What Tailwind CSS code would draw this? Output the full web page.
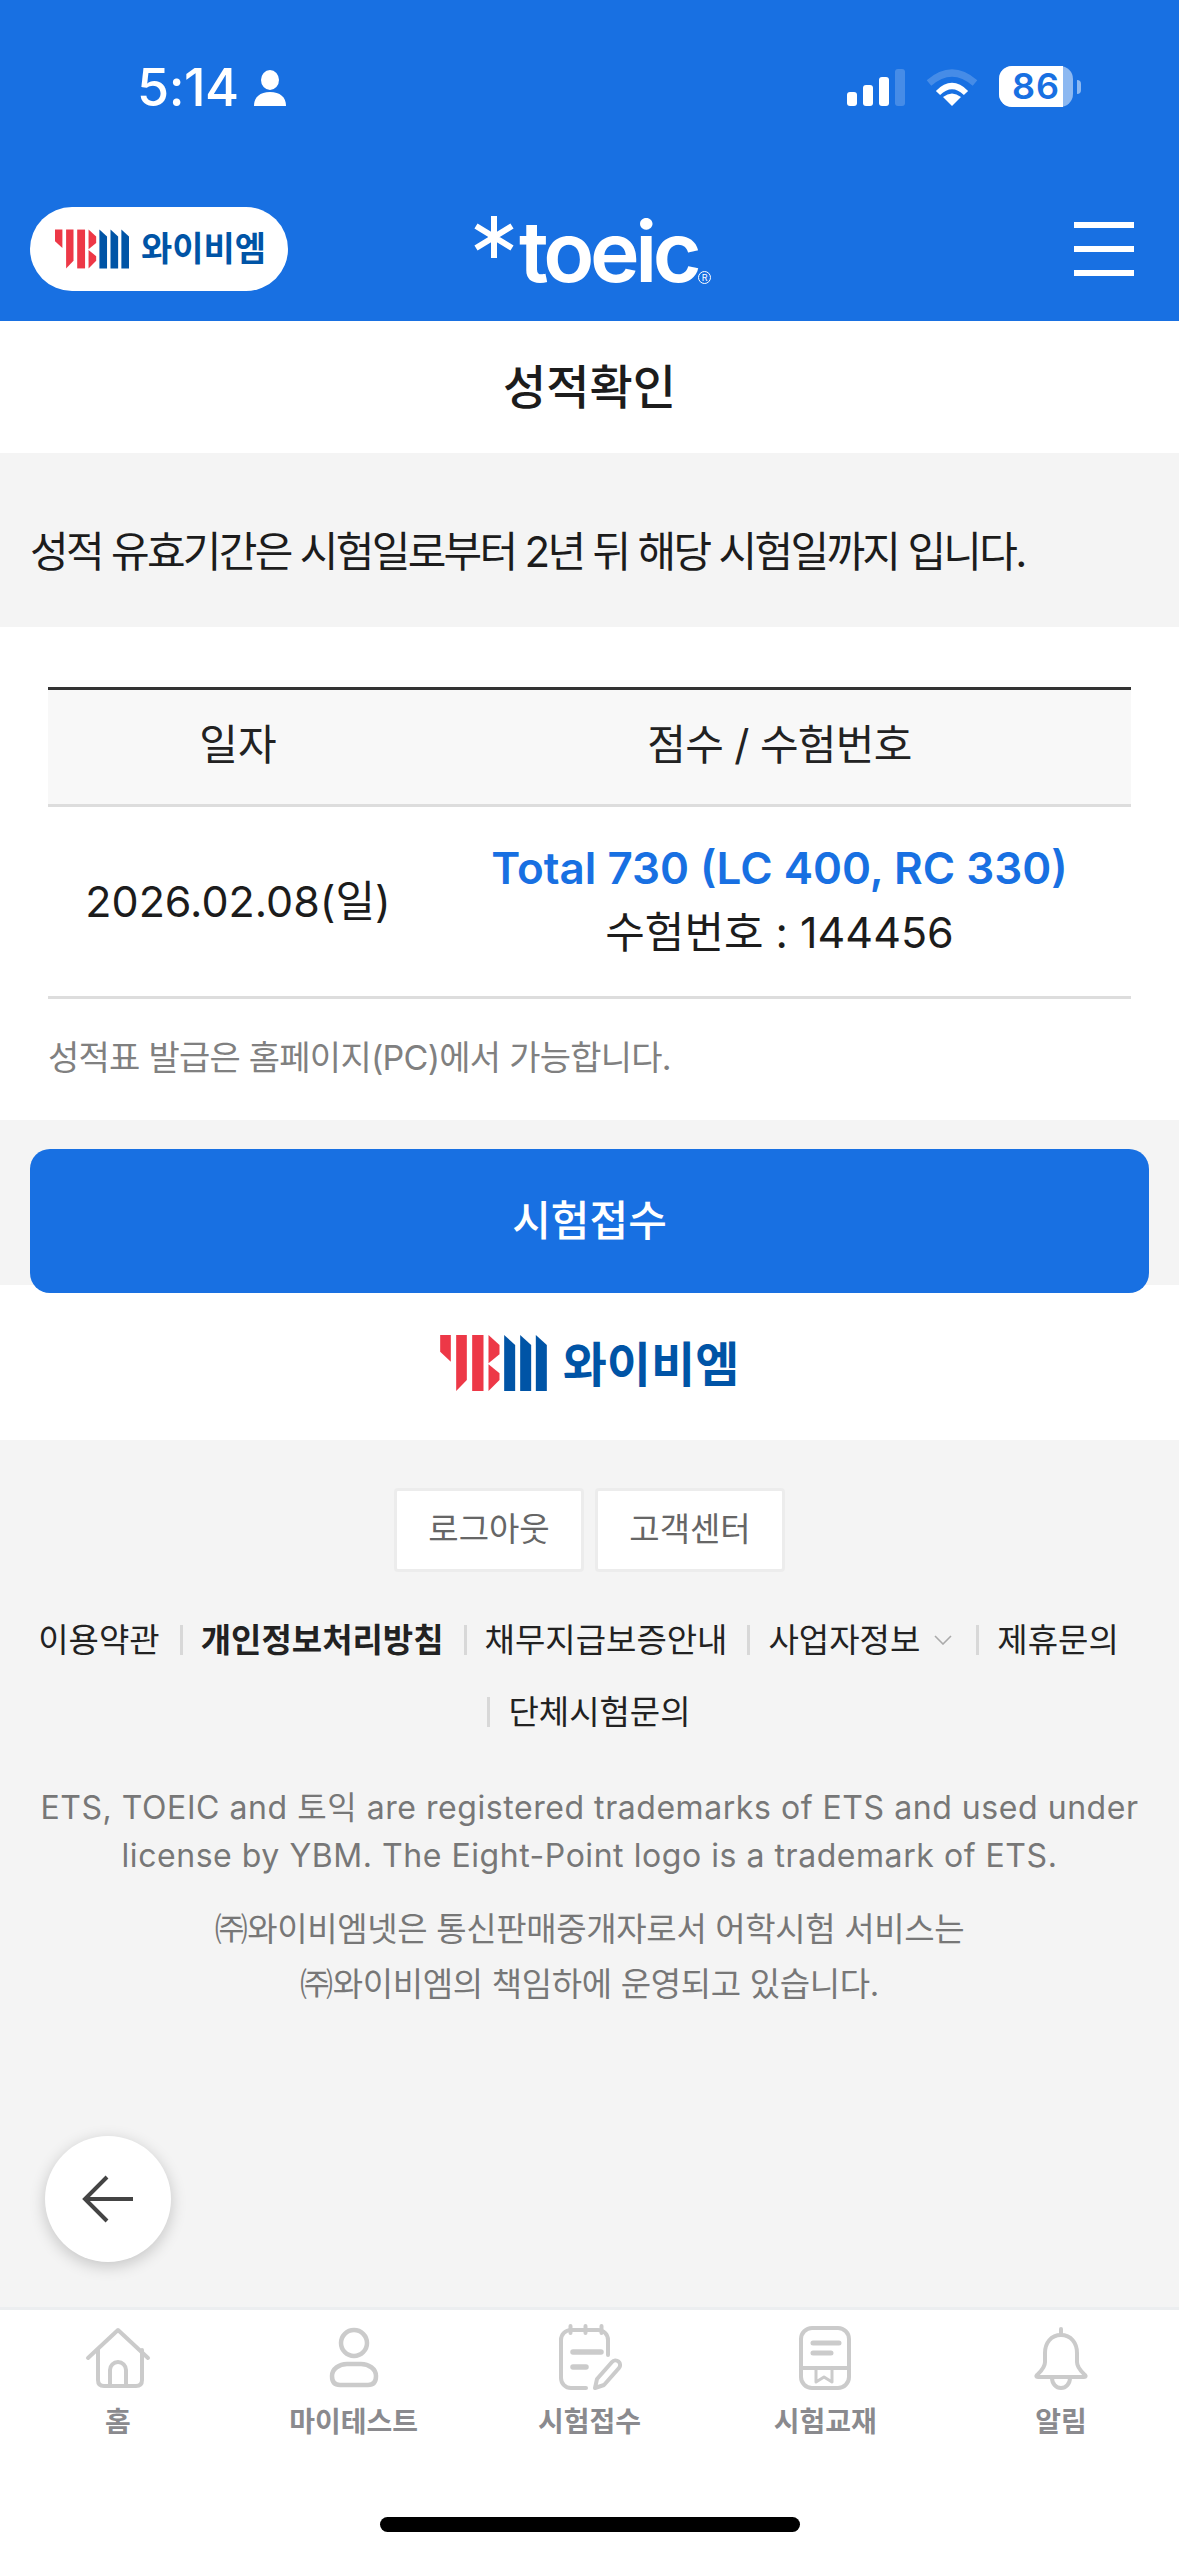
<!DOCTYPE html>
<html lang="ko">
<head>
<meta charset="utf-8">
<script src="https://cdn.jsdelivr.net/npm/@tailwindcss/browser@4"></script>
</head>
<body class="m-0 bg-white">
<div class="relative flex h-[2556px] w-[1179px] flex-col overflow-hidden bg-[#f4f4f4] font-['Inter','Noto_Sans_CJK_KR',sans-serif] text-[#222]">

  <!-- Header -->
  <header class="h-[321px] shrink-0 bg-[#1870e2] text-white">
    <div class="flex h-[207px] items-start justify-between pt-[66px] pl-[137px] pr-[98px]">
      <div class="flex items-center gap-[14px]">
        <span class="text-[52px] leading-[44px] font-medium tracking-[-0.5px]">5:14</span>
        <svg class="h-[36px] w-[34px]" viewBox="0 0 34 36" fill="#fff"><ellipse cx="17" cy="10" rx="9" ry="10"/><path d="M1 36c0-9 6-14 16-14s16 5 16 14z"/></svg>
      </div>
      <div class="flex items-start">
        <svg class="mt-[3px] h-[38px] w-[60px]" viewBox="0 0 60 38" fill="#fff"><rect x="2" y="23" width="10" height="14" rx="3"/><rect x="18" y="16" width="10" height="21" rx="3"/><rect x="34" y="8" width="10" height="29" rx="3"/><rect x="50" y="0" width="10" height="37" rx="3" opacity=".2"/></svg>
        <svg class="mt-[2px] ml-[21px] h-[40px] w-[52px]" viewBox="0 0 52 40" fill="none"><path d="M3 15Q26 -5 49 15" stroke="#fff" stroke-width="7" opacity=".2"/><path d="M12 25Q26 11 40 25" stroke="#fff" stroke-width="6"/><path d="M26 38L17 29Q26 22 35 29Z" fill="#fff"/></svg>
        <div class="relative ml-[21px] flex h-[41px] w-[74px] items-center rounded-[13px] bg-white/50">
          <div class="absolute inset-y-0 left-0 w-[64px] rounded-l-[13px] bg-white"></div>
          <span class="relative w-[74px] text-center text-[36px] leading-[41px] font-semibold tracking-[1px] text-[#1870e2]">86</span>
        </div>
        <div class="mt-[14px] ml-[4px] h-[14px] w-[4px] rounded-r-full bg-white/50"></div>
      </div>
    </div>
    <div class="flex h-[84px] items-center justify-between pl-[30px] pr-[45px]">
      <div class="flex h-[84px] w-[258px] items-center gap-[12px] rounded-full bg-white pl-[25px]">
        <svg class="h-[40px] w-[74px]" viewBox="60 70 320 168"><g fill="#ed3847"><path d="M60 70H92V150L60 120Z"/><path d="M108 70H140V205L108 238Z"/><path d="M156 70H190V238H156Z"/><path d="M205 70L238 100V128L205 155Z"/><path d="M205 158L238 185V205L205 238Z"/></g><g fill="#0054a6"><path d="M252 70L285 100V238H252Z"/><path d="M300 70L333 100V238H300Z"/><path d="M347 70L380 100V238H347Z"/></g></svg>
        <span class="text-[34px] leading-[40px] font-bold text-[#0054a6]">와이비엠</span>
      </div>
      <div class="ml-[186px] flex h-[84px] items-start">
        <svg class="mt-[9px] h-[42px] w-[40px]" viewBox="0 0 40 42" stroke="#fff" stroke-width="6"><path d="M20 0V42M2 10L38 32M2 32L38 10"/></svg>
        <span class="ml-[5px] text-[84px] leading-[90px] font-semibold tracking-[-4.5px]">toeic</span>
        <span class="mt-[64px] ml-[1px] flex h-[13px] w-[13px] items-center justify-center rounded-full border border-white text-[9px] leading-none">R</span>
      </div>
      <div class="ml-auto flex w-[60px] flex-col gap-[18px]">
        <div class="h-[6px] bg-white"></div>
        <div class="h-[6px] bg-white"></div>
        <div class="h-[6px] bg-white"></div>
      </div>
    </div>
  </header>

  <!-- Title -->
  <div class="flex h-[132px] shrink-0 items-center justify-center bg-white">
    <h1 class="text-[47px] font-medium text-[#1c1c1c]">성적확인</h1>
  </div>

  <!-- Notice -->
  <div class="flex h-[174px] shrink-0 items-center px-[30px] pt-[22px]">
    <p class="text-[42px] tracking-[-2.7px] text-[#1c1c1c]">성적 유효기간은 시험일로부터 2년 뒤 해당 시험일까지 입니다.</p>
  </div>

  <!-- Result table -->
  <section class="h-[493px] shrink-0 bg-white px-[48px] pt-[60px]">
    <div class="grid grid-cols-[380px_1fr] border-t-[3px] border-b-[3px] border-t-[#333] border-b-[#ddd] bg-[#f8f8f8] text-[42px] text-[#222]">
      <div class="flex h-[114px] items-center justify-center pb-[6px]">일자</div>
      <div class="flex h-[114px] items-center justify-center pb-[6px] tracking-[-0.7px]">점수 / 수험번호</div>
    </div>
    <div class="grid h-[192px] grid-cols-[380px_1fr] border-b-[3px] border-[#ddd] text-[43px]">
      <div class="flex items-center justify-center text-[#1c1c1c]">2026.02.08(일)</div>
      <div class="flex flex-col items-center justify-center">
        <span class="mt-[-4px] text-[44px] leading-[64px] font-semibold text-[#1870e2]">Total 730 (LC 400, RC 330)</span>
        <span class="text-[#1c1c1c] leading-[64px]">수험번호 : 144456</span>
      </div>
    </div>
    <p class="mt-[36px] text-[34px] leading-[46px] tracking-[-0.75px] text-[#808080]">성적표 발급은 홈페이지(PC)에서 가능합니다.</p>
  </section>

  <!-- Button -->
  <div class="relative z-10 h-[165px] shrink-0 px-[30px] pt-[29px]">
    <button class="flex h-[144px] w-full items-center justify-center rounded-[20px] bg-[#1870e2] pb-[2px] text-[42px] font-medium text-white">시험접수</button>
  </div>

  <!-- Logo band -->
  <div class="flex h-[155px] shrink-0 items-center justify-center gap-[16px] bg-white">
    <svg class="h-[56px] w-[107px]" viewBox="60 70 320 168"><g fill="#ed3847"><path d="M60 70H92V150L60 120Z"/><path d="M108 70H140V205L108 238Z"/><path d="M156 70H190V238H156Z"/><path d="M205 70L238 100V128L205 155Z"/><path d="M205 158L238 185V205L205 238Z"/></g><g fill="#0054a6"><path d="M252 70L285 100V238H252Z"/><path d="M300 70L333 100V238H300Z"/><path d="M347 70L380 100V238H347Z"/></g></svg>
    <span class="pt-[5px] text-[48px] leading-[56px] font-bold text-[#0054a6]">와이비엠</span>
  </div>

  <!-- Footer -->
  <footer class="flex-1 pt-[48px]">
    <div class="flex justify-center gap-[11px]">
      <a class="flex h-[84px] w-[190px] items-center justify-center rounded-[4px] border-[3px] border-[#ececec] bg-white text-[33px] text-[#666]">로그아웃</a>
      <a class="flex h-[84px] w-[190px] items-center justify-center rounded-[4px] border-[3px] border-[#ececec] bg-white text-[33px] text-[#666]">고객센터</a>
    </div>
    <ul class="mt-[32px] flex w-[1157px] flex-wrap justify-center text-[33px] leading-[72px] text-[#222]">
      <li>이용약관</li>
      <li class="flex items-center pl-[20px]"><i class="mr-[18px] h-[30px] w-[3px] bg-[#d8d8d8]"></i><b class="font-bold">개인정보처리방침</b></li>
      <li class="flex items-center pl-[20px]"><i class="mr-[18px] h-[30px] w-[3px] bg-[#d8d8d8]"></i>채무지급보증안내</li>
      <li class="flex items-center pl-[20px]"><i class="mr-[18px] h-[30px] w-[3px] bg-[#d8d8d8]"></i>사업자정보<svg class="ml-[14px] h-[10px] w-[18px]" viewBox="0 0 18 10" fill="none" stroke="#aaa" stroke-width="1.6"><path d="M1 1L9 9L17 1"/></svg></li>
      <li class="flex items-center pl-[24px]"><i class="mr-[18px] h-[30px] w-[3px] bg-[#d8d8d8]"></i>제휴문의</li>
      <li class="flex items-center pl-[21px]"><i class="mr-[18px] h-[30px] w-[3px] bg-[#d8d8d8]"></i>단체시험문의</li>
    </ul>
    <p class="mt-[36px] text-center text-[32px] leading-[48px] tracking-[0.55px] text-[#777]">ETS, TOEIC and 토익 are registered trademarks of ETS and used under<br>license by YBM. The Eight-Point logo is a trademark of ETS.</p>
    <p class="mt-[22px] text-center text-[33px] leading-[55px] tracking-[-0.35px] text-[#777]">㈜와이비엠넷은 통신판매중개자로서 어학시험 서비스는<br>㈜와이비엠의 책임하에 운영되고 있습니다.</p>
  </footer>

  <!-- Back button -->
  <button class="absolute top-[2136px] left-[45px] z-20 flex h-[126px] w-[126px] items-center justify-center rounded-full bg-white shadow-[0_4px_16px_rgba(0,0,0,0.2)]">
    <svg class="h-[48px] w-[52px]" viewBox="0 0 52 48" fill="none" stroke="#444" stroke-width="4"><path d="M25 2L3 24L25 46M3 24H51"/></svg>
  </button>

  <!-- Tab bar -->
  <nav class="h-[249px] shrink-0 border-t-[3px] border-[#eceef0] bg-white">
    <div class="grid grid-cols-5 pt-[12px] text-center text-[28px] leading-[36px] font-semibold text-[#8a8a8e]">
      <div class="flex flex-col items-center gap-[10px]">
        <svg class="h-[72px] w-[72px]" viewBox="0 0 72 72" fill="none" stroke="#cbcbcb" stroke-width="4" stroke-linecap="round" stroke-linejoin="round"><path d="M6 36L36 8L66 36"/><path d="M16 28V58Q16 64 22 64H54Q60 64 60 58V28"/><path d="M28 64V48a8 8 0 0 1 16 0V64"/></svg>
        <span>홈</span>
      </div>
      <div class="flex flex-col items-center gap-[10px]">
        <svg class="h-[72px] w-[72px]" viewBox="0 0 72 72" fill="none" stroke="#cbcbcb" stroke-width="4.5" stroke-linecap="round" stroke-linejoin="round"><circle cx="36" cy="21" r="13"/><path d="M14 54C14 47 21 42 29 42H43C51 42 58 47 58 54C58 60 55 63 50 63H22C17 63 14 60 14 54Z"/></svg>
        <span>마이테스트</span>
      </div>
      <div class="flex flex-col items-center gap-[10px]">
        <svg class="h-[72px] w-[72px]" viewBox="0 0 72 72" fill="none" stroke="#cbcbcb" stroke-width="4" stroke-linecap="round" stroke-linejoin="round"><path d="M33 66H18A10 10 0 0 1 8 56V18A10 10 0 0 1 18 8H45A10 10 0 0 1 55 18V33"/><path d="M17.5 4V11M32.5 4V11M48.5 4V11"/><path d="M20 30H48M20 45H33" stroke-width="5.5"/><path d="M44 57L59 40A4.5 4.5 0 0 1 66 46L51 63L42 66Z"/></svg>
        <span>시험접수</span>
      </div>
      <div class="flex flex-col items-center gap-[10px]">
        <svg class="h-[72px] w-[72px]" viewBox="0 0 72 72" fill="none" stroke="#cbcbcb" stroke-width="4" stroke-linecap="round" stroke-linejoin="round"><rect x="12" y="6" width="48" height="60" rx="11"/><path d="M12 46H60"/><path d="M24 21H50M24 31H42" stroke-width="5"/><path d="M27 46V60L35 55L43 60V46" stroke-width="3"/></svg>
        <span>시험교재</span>
      </div>
      <div class="flex flex-col items-center gap-[10px]">
        <svg class="h-[72px] w-[72px]" viewBox="0 0 72 72" fill="none" stroke="#cbcbcb" stroke-width="4" stroke-linecap="round" stroke-linejoin="round"><path d="M36 7V13"/><path d="M36 13C26 13 20 21 20 31V40C20 46 15 50 12 53C11 54 11 55 13 55H59C61 55 61 54 60 53C57 50 52 46 52 40V31C52 21 46 13 36 13Z"/><path d="M27 56A9 10 0 0 0 45 56"/></svg>
        <span>알림</span>
      </div>
    </div>
  </nav>

  <!-- Home indicator -->
  <div class="absolute top-[2517px] left-[380px] z-20 h-[15px] w-[420px] rounded-full bg-black"></div>
</div>
</body>
</html>
